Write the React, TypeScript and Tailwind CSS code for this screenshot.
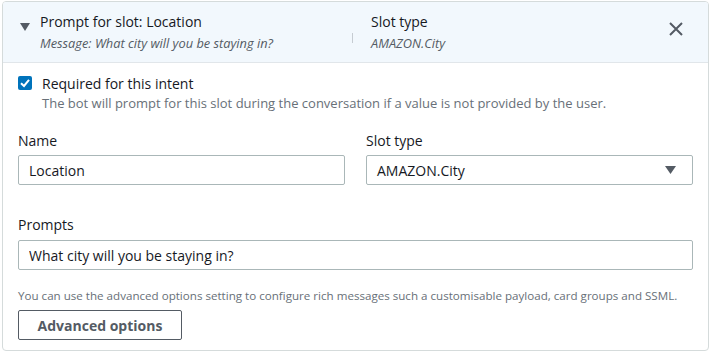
import React, { useState } from 'react';

const font = { fontFamily: '"Open Sans", "Noto Sans", Arial, sans-serif' };

export default function App() {
  const [required, setRequired] = useState(true);
  const [name, setName] = useState('Location');
  const [prompt, setPrompt] = useState('What city will you be staying in?');

  return (
    <div className="w-[711px] h-[352px] bg-white pt-px pl-[2px] pr-[2px] pb-px" style={font}>
      <div className="h-full border border-[#d5dbdb] rounded-[4px] overflow-hidden flex flex-col">
        {/* Header */}
        <div className="h-[61px] shrink-0 bg-[#f2f8fd] border-b border-[#e1e6ea] flex items-center pl-[17px] pr-[24px]">
          <svg className="w-[10px] h-[8px] text-[#545b64] mr-[10px] mt-[-10px]" viewBox="0 0 10 8">
            <path d="M0 0 L10 0 L5 8 Z" fill="currentColor" />
          </svg>
          <div className="w-[312px]">
            <div className="text-[14px] leading-[18px] text-[#16191f]">Prompt for slot: Location</div>
            <div className="text-[12.8px] leading-[16px] italic text-[#545b64] mt-[4px]">
              Message: What city will you be staying in?
            </div>
          </div>
          <div className="w-px h-[10px] bg-[#c6ccd2] mt-[12px]" />
          <div className="flex-1 pl-[18px]">
            <div className="text-[14px] leading-[18px] text-[#16191f]">Slot type</div>
            <div className="text-[12.8px] leading-[16px] italic text-[#545b64] mt-[4px]">AMAZON.City</div>
          </div>
          <button className="w-[16px] h-[16px] text-[#545b64] -mt-[6px]" aria-label="Close">
            <svg viewBox="0 0 16 16" className="w-full h-full">
              <path d="M2 2 L14 14 M14 2 L2 14" stroke="currentColor" strokeWidth="2" />
            </svg>
          </button>
        </div>

        {/* Body */}
        <div className="flex-1 px-[15px] pt-[12px]">
          <label className="flex items-start gap-[10px] cursor-pointer">
            <span
              onClick={() => setRequired(!required)}
              className={`mt-[1px] w-[14px] h-[14px] rounded-[2px] flex items-center justify-center ${required ? 'bg-[#0073bb]' : 'border border-[#aab7b8] bg-white'}`}
            >
              {required && (
                <svg viewBox="0 0 14 14" className="w-[14px] h-[14px]">
                  <path d="M3 7.2 L6 10 L11 3.8" stroke="white" strokeWidth="2" fill="none" />
                </svg>
              )}
            </span>
            <div>
              <div className="text-[14px] leading-[17px] text-[#16191f]">Required for this intent</div>
              <div className="text-[13px] leading-[16px] text-[#687078] mt-[3px]">
                The bot will prompt for this slot during the conversation if a value is not provided by the user.
              </div>
            </div>
          </label>

          <div className="grid grid-cols-2 gap-x-[21px] mt-[21px]">
            <div>
              <div className="text-[14px] leading-[18px] text-[#16191f] mb-[5px]">Name</div>
              <input
                value={name}
                onChange={(e) => setName(e.target.value)}
                className="w-full h-[30px] border border-[#aab7b8] rounded-[2px] px-[10px] text-[14px] text-[#16191f] outline-none"
                style={font}
              />
            </div>
            <div>
              <div className="text-[14px] leading-[18px] text-[#16191f] mb-[5px]">Slot type</div>
              <div className="w-full h-[30px] border border-[#aab7b8] rounded-[2px] pl-[10px] pr-[16px] flex items-center justify-between text-[14px] text-[#16191f]">
                <span>AMAZON.City</span>
                <svg className="w-[11px] h-[8px] text-[#545b64]" viewBox="0 0 11 8">
                  <path d="M0 0 L11 0 L5.5 8 Z" fill="currentColor" />
                </svg>
              </div>
            </div>
          </div>

          <div className="mt-[31px]">
            <div className="text-[14px] leading-[18px] text-[#16191f] mb-[6px]">Prompts</div>
            <input
              value={prompt}
              onChange={(e) => setPrompt(e.target.value)}
              className="w-full h-[30px] border border-[#aab7b8] rounded-[2px] px-[10px] text-[14px] text-[#16191f] outline-none"
              style={font}
            />
          </div>

          <div className="text-[11.6px] leading-[16px] text-[#687078] mt-[18px] whitespace-nowrap">
            You can use the advanced options setting to configure rich messages such a customisable payload, card groups and SSML.
          </div>

          <button className="mt-[6px] w-[164px] h-[30px] border border-[#545b64] rounded-[2px] text-[14px] font-bold text-[#545b64]">
            Advanced options
          </button>
        </div>
      </div>
    </div>
  );
}
